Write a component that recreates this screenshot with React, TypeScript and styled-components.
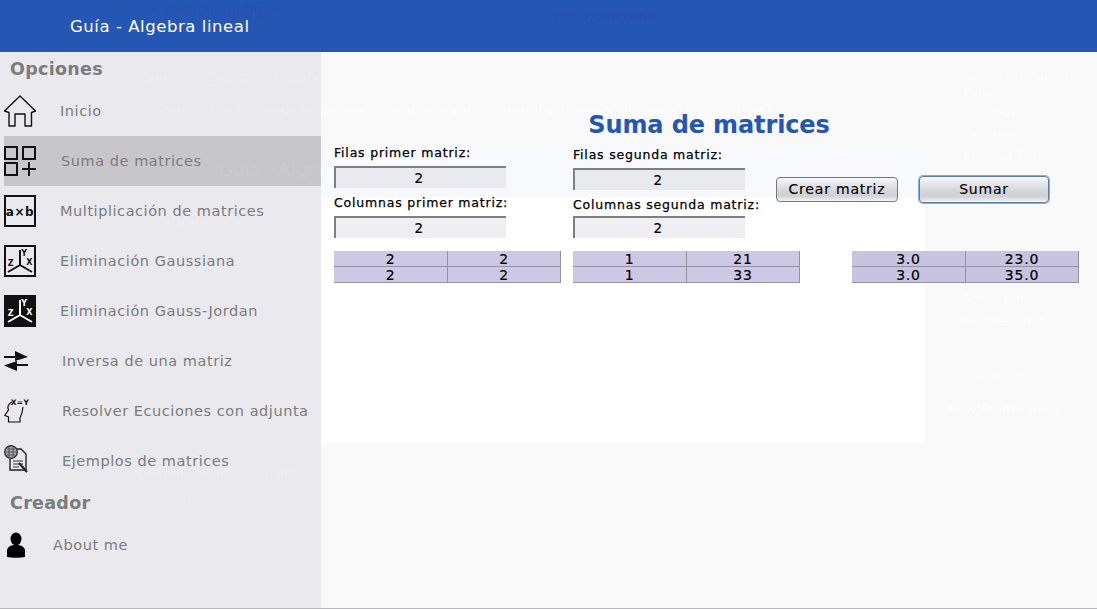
import styled, { createGlobalStyle } from 'styled-components';

const GlobalStyle = createGlobalStyle`
	html, body {
		margin: 0;
		padding: 0;
		background: #f9f9f9;
	}
	body {
		font-family: 'DejaVu Sans', 'Liberation Sans', sans-serif;
	}
`;

const Frame = styled.div`
	width: 1097px;
	height: 609px;
	display: flex;
	flex-direction: column;
	overflow: hidden;
	box-sizing: border-box;
	border-bottom: 1px solid #b9b9bd;
`;

const Header = styled.header`
	position: relative;
	height: 52px;
	flex: none;
	display: flex;
	align-items: center;
	padding-left: 70px;
	background: #2556b4;
	overflow: hidden;
`;

const HeaderTitle = styled.h1`
	position: relative;
	margin: 0;
	font-size: 16.5px;
	font-weight: 400;
	letter-spacing: 0.55px;
	color: #fff;
`;

const Body = styled.div`
	flex: 1;
	display: flex;
	min-height: 0;
`;

const Sidebar = styled.aside`
	position: relative;
	width: 321px;
	flex: none;
	background: #e9e9ee;
	overflow: hidden;
`;

const SectionTitle = styled.h2`
	position: relative;
	height: 34px;
	margin: 0;
	padding-left: 10px;
	font-size: 17.5px;
	line-height: 34px;
	font-weight: 700;
	letter-spacing: 0.3px;
	color: #7c7c7c;
`;

const NavList = styled.nav`
	position: relative;
	display: flex;
	flex-direction: column;
`;

const NavItem = styled.div<{ $active?: boolean; $gap: number }>`
	height: 50px;
	margin-left: 4px;
	display: flex;
	align-items: center;
	gap: ${(p) => p.$gap}px;
	background: ${(p) => (p.$active ? 'rgba(0, 0, 0, 0.145)' : 'transparent')};
	font-size: 14.5px;
	letter-spacing: 0.55px;
	color: #7c7c7c;
`;

const IconBox = styled.svg`
	width: 32px;
	height: 32px;
	flex: none;
`;

const IconLetter = styled.text`
	font-family: 'DejaVu Sans', sans-serif;
	font-weight: 700;
	text-anchor: middle;
`;

const Main = styled.main`
	position: relative;
	flex: 1;
	background: #f9f9f9;
	overflow: hidden;
`;

const BlueBand = styled.div`
	position: absolute;
	left: 0;
	top: 94px;
	width: 609px;
	height: 51px;
	background: #f8f9fd;
`;

const WhitePane = styled.div`
	position: absolute;
	left: 0;
	top: 145px;
	width: 604px;
	height: 246px;
	background: #fff;
`;

const ghostTones = {
	dark: 'rgba(20, 50, 110, 0.1)',
	soft: 'rgba(255, 255, 255, 0.22)',
	light: 'rgba(255, 255, 255, 0.6)',
};

const Ghost = styled.span<{ $x: number; $y: number; $size?: number; $tone: keyof typeof ghostTones }>`
	position: absolute;
	left: ${(p) => p.$x}px;
	top: ${(p) => p.$y}px;
	font-size: ${(p) => p.$size ?? 13}px;
	line-height: 1;
	white-space: nowrap;
	color: ${(p) => ghostTones[p.$tone]};
`;

const Content = styled.div`
	position: relative;
	padding: 57px 0 0 13px;
`;

const Title = styled.div`
	height: 32px;
	margin: 0 0 2px -13px;
	font-size: 24px;
	line-height: 32px;
	font-weight: 700;
	letter-spacing: -0.12px;
	text-align: center;
	color: #2556b4;
`;

const FormRow = styled.div`
	display: flex;
	height: 95px;
`;

const FormColumn = styled.div<{ $width: number; $top: number }>`
	width: ${(p) => p.$width}px;
	flex: none;
	padding-top: ${(p) => p.$top}px;
	box-sizing: border-box;
`;

const FieldLabel = styled.label<{ $push?: number }>`
	display: block;
	height: 23px;
	padding-top: ${(p) => p.$push ?? 0}px;
	box-sizing: border-box;
	font-size: 12.5px;
	line-height: 19px;
	font-weight: 400;
	letter-spacing: 0.8px;
	white-space: nowrap;
	-webkit-text-stroke: 0.25px #000;
	color: #000;
`;

const Field = styled.input<{ $light?: boolean; $gapBelow?: number }>`
	display: block;
	width: 172px;
	height: 22px;
	padding: 0 4px 0 0;
	margin-bottom: ${(p) => p.$gapBelow ?? 5}px;
	box-sizing: border-box;
	border: 0;
	border-top: 2px solid #7f7f7f;
	border-left: 2px solid #7f7f7f;
	outline: 0;
	border-radius: 0;
	background: ${(p) => (p.$light ? '#eeeef3' : '#e9e9f0')};
	font-family: inherit;
	font-size: 13.5px;
	letter-spacing: 0.5px;
	text-align: center;
	-webkit-text-stroke: 0.2px #000;
	color: #000;
`;

const ButtonRow = styled.div`
	display: flex;
	align-items: center;
	gap: 21px;
	height: 27px;
	margin-top: 33px;
`;

const ActionButton = styled.button<{ $width: number; $focused?: boolean }>`
	width: ${(p) => p.$width}px;
	height: ${(p) => (p.$focused ? 27 : 25)}px;
	padding: 0 0 2px;
	box-sizing: border-box;
	border: 1px solid ${(p) => (p.$focused ? '#5f7f9f' : '#78797e')};
	border-radius: 4px;
	background: linear-gradient(to bottom, #f6f7f9 0%, #d5d6da 55%, #cfd1d5 78%, #f3f5f8 100%);
	box-shadow: ${(p) => (p.$focused ? '0 0 0 1px #82aeda' : 'none')};
	font-family: inherit;
	font-size: 14px;
	letter-spacing: 0.8px;
	-webkit-text-stroke: 0.15px #000;
	color: #000;
`;

const MatrixRow = styled.div`
	display: flex;
	gap: 12px;
	margin-top: 13px;
`;

const Matrix = styled.div<{ $result?: boolean }>`
	width: 227px;
	display: grid;
	grid-template-columns: 114px 113px;
	grid-auto-rows: 16px;
	margin-left: ${(p) => (p.$result ? 40 : 0)}px;
	background: ${(p) => (p.$result ? '#c8c4df' : '#cdc9e4')};
`;

const MatrixCell = styled.div`
	box-sizing: border-box;
	border-right: 1px solid #94949f;
	border-bottom: 1px solid #94949f;
	font-size: 14px;
	line-height: 16px;
	letter-spacing: 0.8px;
	text-align: center;
	-webkit-text-stroke: 0.2px #000;
	color: #000;
`;

const HouseIcon = () => (
	<IconBox viewBox="0 0 32 32">
		<path
			d="M16 1 L31.5 16 L27.5 17.5 V31 H21 V19 H11 V31 H5 V17.5 L.5 16 Z"
			fill="none"
			stroke="#111"
			strokeWidth="1.4"
			strokeLinejoin="round"
		/>
	</IconBox>
);

const SumIcon = () => (
	<IconBox viewBox="0 0 32 32">
		<g fill="none" stroke="#111" strokeWidth="2">
			<rect x="1" y="2" width="12" height="12" />
			<rect x="19" y="2" width="12" height="12" />
			<rect x="1" y="18" width="12" height="12" />
			<path d="M18 24 H32 M25 17 V31" />
		</g>
	</IconBox>
);

const ProductIcon = () => (
	<IconBox viewBox="0 0 32 32">
		<rect x="1" y="1" width="30" height="30" fill="none" stroke="#111" strokeWidth="2" />
		<IconLetter x="16" y="20.5" fontSize="12" fill="#111">a×b</IconLetter>
	</IconBox>
);

const AxesIcon = ({ inverted }: { inverted?: boolean }) => {
	const ink = inverted ? '#fff' : '#111';
	return (
		<IconBox viewBox="0 0 32 32">
			<rect x="1" y="1" width="30" height="30" fill={inverted ? '#111' : 'none'} stroke="#111" strokeWidth="2" />
			<path d="M16 5 V20 L4 27 M16 20 L28 27" fill="none" stroke={ink} strokeWidth="2" />
			<IconLetter x="20.5" y="10.5" fontSize="8" fill={ink}>Y</IconLetter>
			<IconLetter x="7" y="20.5" fontSize="8" fill={ink}>Z</IconLetter>
			<IconLetter x="25.5" y="20" fontSize="8" fill={ink}>X</IconLetter>
		</IconBox>
	);
};

const SwapIcon = () => (
	<IconBox viewBox="0 0 32 32">
		<g fill="#111">
			<path d="M0 11 H11 V6 L24 12 L11 16 V13 H0 Z" />
			<path d="M24 19 H13 V16 L0 20.500 L13 26 V21 H24 Z" />
		</g>
	</IconBox>
);

const HeadIcon = () => (
	<IconBox viewBox="0 0 32 32">
		<path
			d="M8 7 C4.500 8.500 3 12 4.500 15 L.8 20.500 L4.500 22 V27 H16 V23 C17.500 20 18.500 17 19 12"
			fill="none"
			stroke="#111"
			strokeWidth="1.2"
		/>
		<IconLetter x="16" y="10" fontSize="7.5" letterSpacing="0.4" fill="#111">X=Y</IconLetter>
	</IconBox>
);

const ExamplesIcon = () => (
	<IconBox viewBox="0 0 32 32">
		<path d="M8 4 H17 L22 9 V25 H6 V14" fill="#e8e8ec" stroke="#222" strokeWidth="1.4" />
		<path d="M9 16 H19 M9 19 H19 M9 22 H15" stroke="#333" strokeWidth="1" />
		<circle cx="7" cy="7" r="6.300" fill="#a9a9ae" stroke="#333" strokeWidth="1.400" />
		<path d="M3 4 H11 M2 7 H12 M3 10 H11 M5 2 V12 M9 2 V12" stroke="#444" strokeWidth="0.8" />
		<path d="M15 18 L23 27" stroke="#222" strokeWidth="2.200" />
	</IconBox>
);

const PersonIcon = () => (
	<IconBox viewBox="0 0 32 32">
		<g fill="#000">
			<ellipse cx="12" cy="10" rx="5.500" ry="6.500" />
			<path d="M3 28 V22 C3 17 8 16 12 16 C16 16 21 17 21 22 V28 C16 29 8 29 3 28 Z" />
		</g>
	</IconBox>
);

const options = [
	{ label: 'Inicio', icon: <HouseIcon />, gap: 24 },
	{ label: 'Suma de matrices', icon: <SumIcon />, gap: 25, active: true },
	{ label: 'Multiplicación de matrices', icon: <ProductIcon />, gap: 24 },
	{ label: 'Eliminación Gaussiana', icon: <AxesIcon />, gap: 24 },
	{ label: 'Eliminación Gauss-Jordan', icon: <AxesIcon inverted />, gap: 24 },
	{ label: 'Inversa de una matriz', icon: <SwapIcon />, gap: 26 },
	{ label: 'Resolver Ecuciones con adjunta', icon: <HeadIcon />, gap: 26 },
	{ label: 'Ejemplos de matrices', icon: <ExamplesIcon />, gap: 26 },
];

const sidebarGhosts = [
	{ text: 'Source', x: 143, y: 18 },
	{ text: 'Design', x: 208, y: 18 },
	{ text: 'History', x: 273, y: 18 },
	{ text: 'Select the root node in', x: 165, y: 51 },
	{ text: 'Guía - Algebra', x: 219, y: 109, size: 18 },
	{ text: 'Opciones', x: 162, y: 158, size: 17 },
	{ text: 'Output - Matrices (run)', x: 137, y: 414, size: 14 },
	{ text: 'run:', x: 183, y: 441 },
];

const mainGhosts = [
	{ text: 'Navigator to access various useful settings of the form (in Properties)', x: -3, y: 51 },
	{ text: 'Swing Containers', x: 642, y: 17 },
	{ text: 'Panel', x: 642, y: 34 },
	{ text: 'Split Pane', x: 642, y: 55 },
	{ text: 'Tool Bar', x: 642, y: 76 },
	{ text: 'Internal Frame', x: 642, y: 97 },
	{ text: 'Scroll Bar', x: 642, y: 240 },
	{ text: 'Progress Bar', x: 642, y: 262 },
	{ text: 'Properties', x: 634, y: 316 },
	{ text: 'NewJFrame.java', x: 625, y: 350, size: 14 },
];

const firstMatrix = ['2', '2', '2', '2'];
const secondMatrix = ['1', '21', '1', '33'];
const resultMatrix = ['3.0', '23.0', '3.0', '35.0'];

const App = () => {
	return (
		<>
			<GlobalStyle />
			<Frame>
				<Header>
					<Ghost $tone="dark" $x={150} $y={3} $size={14}>{'< default config >'}</Ghost>
					<Ghost $tone="dark" $x={553} $y={10}>236.7/349.0MB</Ghost>
					<HeaderTitle>Guía - Algebra lineal</HeaderTitle>
				</Header>
				<Body>
					<Sidebar>
						{sidebarGhosts.map((g) => (
							<Ghost key={g.text} $tone="soft" $x={g.x} $y={g.y} $size={g.size}>{g.text}</Ghost>
						))}
						<SectionTitle>Opciones</SectionTitle>
						<NavList>
							{options.map((o) => (
								<NavItem key={o.label} $gap={o.gap} $active={o.active}>
									{o.icon}
									<span>{o.label}</span>
								</NavItem>
							))}
						</NavList>
						<SectionTitle>Creador</SectionTitle>
						<NavList>
							<NavItem $gap={17}>
								<PersonIcon />
								<span>About me</span>
							</NavItem>
						</NavList>
					</Sidebar>
					<Main>
						<BlueBand />
						<WhitePane />
						{mainGhosts.map((g) => (
							<Ghost key={g.text} $tone="light" $x={g.x} $y={g.y} $size={g.size}>{g.text}</Ghost>
						))}
						<Content>
							<Title>Suma de matrices</Title>
							<FormRow>
								<FormColumn $width={239} $top={0}>
									<FieldLabel>Filas primer matriz:</FieldLabel>
									<Field readOnly value="2" />
									<FieldLabel>Columnas primer matriz:</FieldLabel>
									<Field readOnly value="2" $light />
								</FormColumn>
								<FormColumn $width={203} $top={2}>
									<FieldLabel>Filas segunda matriz:</FieldLabel>
									<Field readOnly value="2" $gapBelow={3} />
									<FieldLabel $push={2}>Columnas segunda matriz:</FieldLabel>
									<Field readOnly value="2" $light />
								</FormColumn>
								<ButtonRow>
									<ActionButton $width={122}>Crear matriz</ActionButton>
									<ActionButton $width={130} $focused>Sumar</ActionButton>
								</ButtonRow>
							</FormRow>
							<MatrixRow>
								<Matrix>
									{firstMatrix.map((v, i) => <MatrixCell key={i}>{v}</MatrixCell>)}
								</Matrix>
								<Matrix>
									{secondMatrix.map((v, i) => <MatrixCell key={i}>{v}</MatrixCell>)}
								</Matrix>
								<Matrix $result>
									{resultMatrix.map((v, i) => <MatrixCell key={i}>{v}</MatrixCell>)}
								</Matrix>
							</MatrixRow>
						</Content>
					</Main>
				</Body>
			</Frame>
		</>
	);
};

export default App;
